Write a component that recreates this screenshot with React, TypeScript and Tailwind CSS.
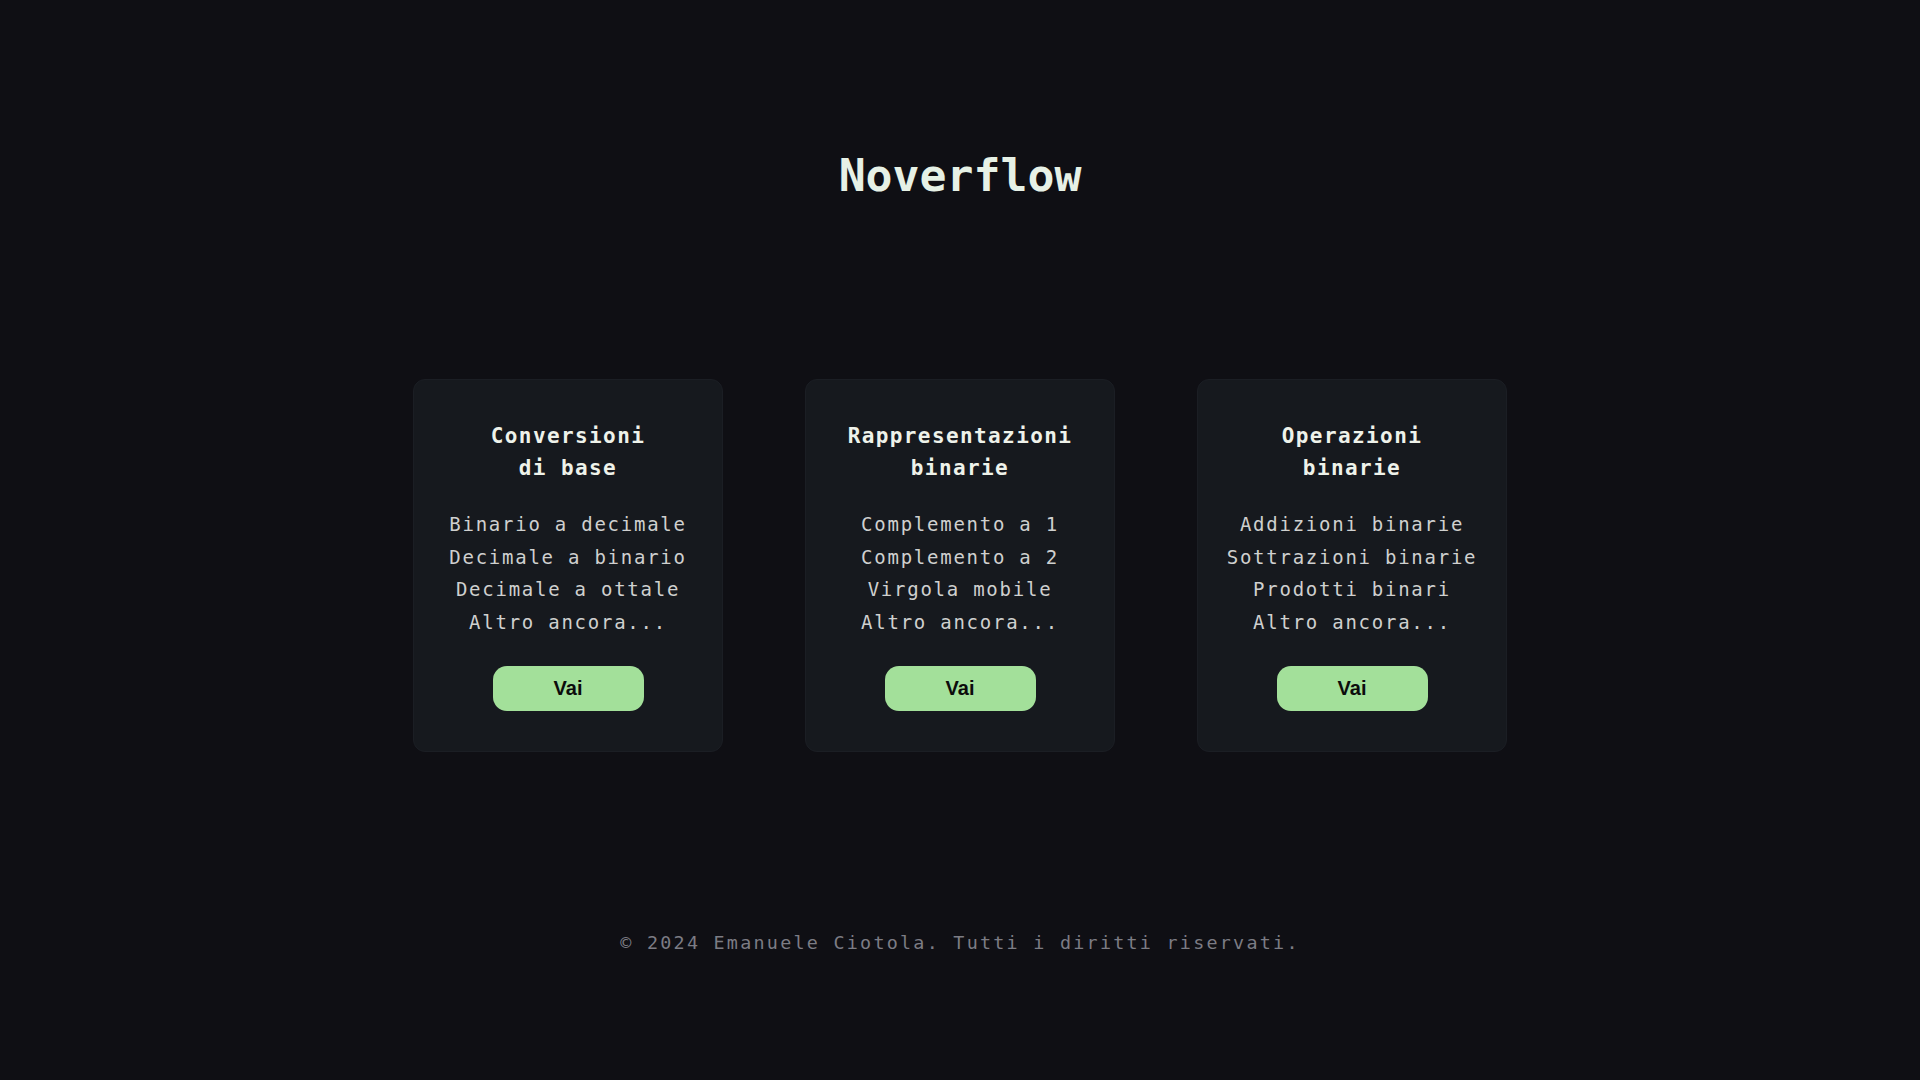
import React from "react";

const cards = [
  {
    title: ["Conversioni", "di base"],
    items: ["Binario a decimale", "Decimale a binario", "Decimale a ottale", "Altro ancora..."],
  },
  {
    title: ["Rappresentazioni", "binarie"],
    items: ["Complemento a 1", "Complemento a 2", "Virgola mobile", "Altro ancora..."],
  },
  {
    title: ["Operazioni", "binarie"],
    items: ["Addizioni binarie", "Sottrazioni binarie", "Prodotti binari", "Altro ancora..."],
  },
];

export default function App() {
  return (
    <div
      className="min-h-screen w-full bg-[#0f0f14] flex flex-col items-center"
      style={{ fontFamily: '"DejaVu Sans Mono", "Liberation Mono", monospace' }}
    >
      <h1 className="mt-[150px] text-[44.8px] leading-[52px] font-bold text-[#e6f1e6]">Noverflow</h1>

      <main className="mt-[177px] flex gap-[82px]">
        {cards.map((c) => (
          <div
            key={c.title[0]}
            className="w-[310px] rounded-xl border border-[#1b1e24] bg-[#16191e] px-[36px] pt-[40px] pb-[40px] flex flex-col items-center text-center"
          >
            <h2 className="text-[21px] leading-[32px] font-bold tracking-[1.4px] text-[#eef2ea]">
              {c.title[0]}
              <br />
              {c.title[1]}
            </h2>
            <ul className="mt-[24px] text-[19px] leading-[32.7px] tracking-[1.75px] text-[#cfd0cf] whitespace-nowrap">
              {c.items.map((it) => (
                <li key={it}>{it}</li>
              ))}
            </ul>
            <button
              className="mt-[27px] w-[151px] h-[45px] rounded-[14px] bg-[#a3e09a] text-[20px] font-bold text-[#0c0c0c]"
              style={{ fontFamily: '"Liberation Sans", Arial, sans-serif' }}
            >
              Vai
            </button>
          </div>
        ))}
      </main>

      <footer className="mt-[180px] text-[18.4px] leading-[21.4px] tracking-[2.25px] text-[#7c7c84]">
        © 2024 Emanuele Ciotola. Tutti i diritti riservati.
      </footer>
    </div>
  );
}
